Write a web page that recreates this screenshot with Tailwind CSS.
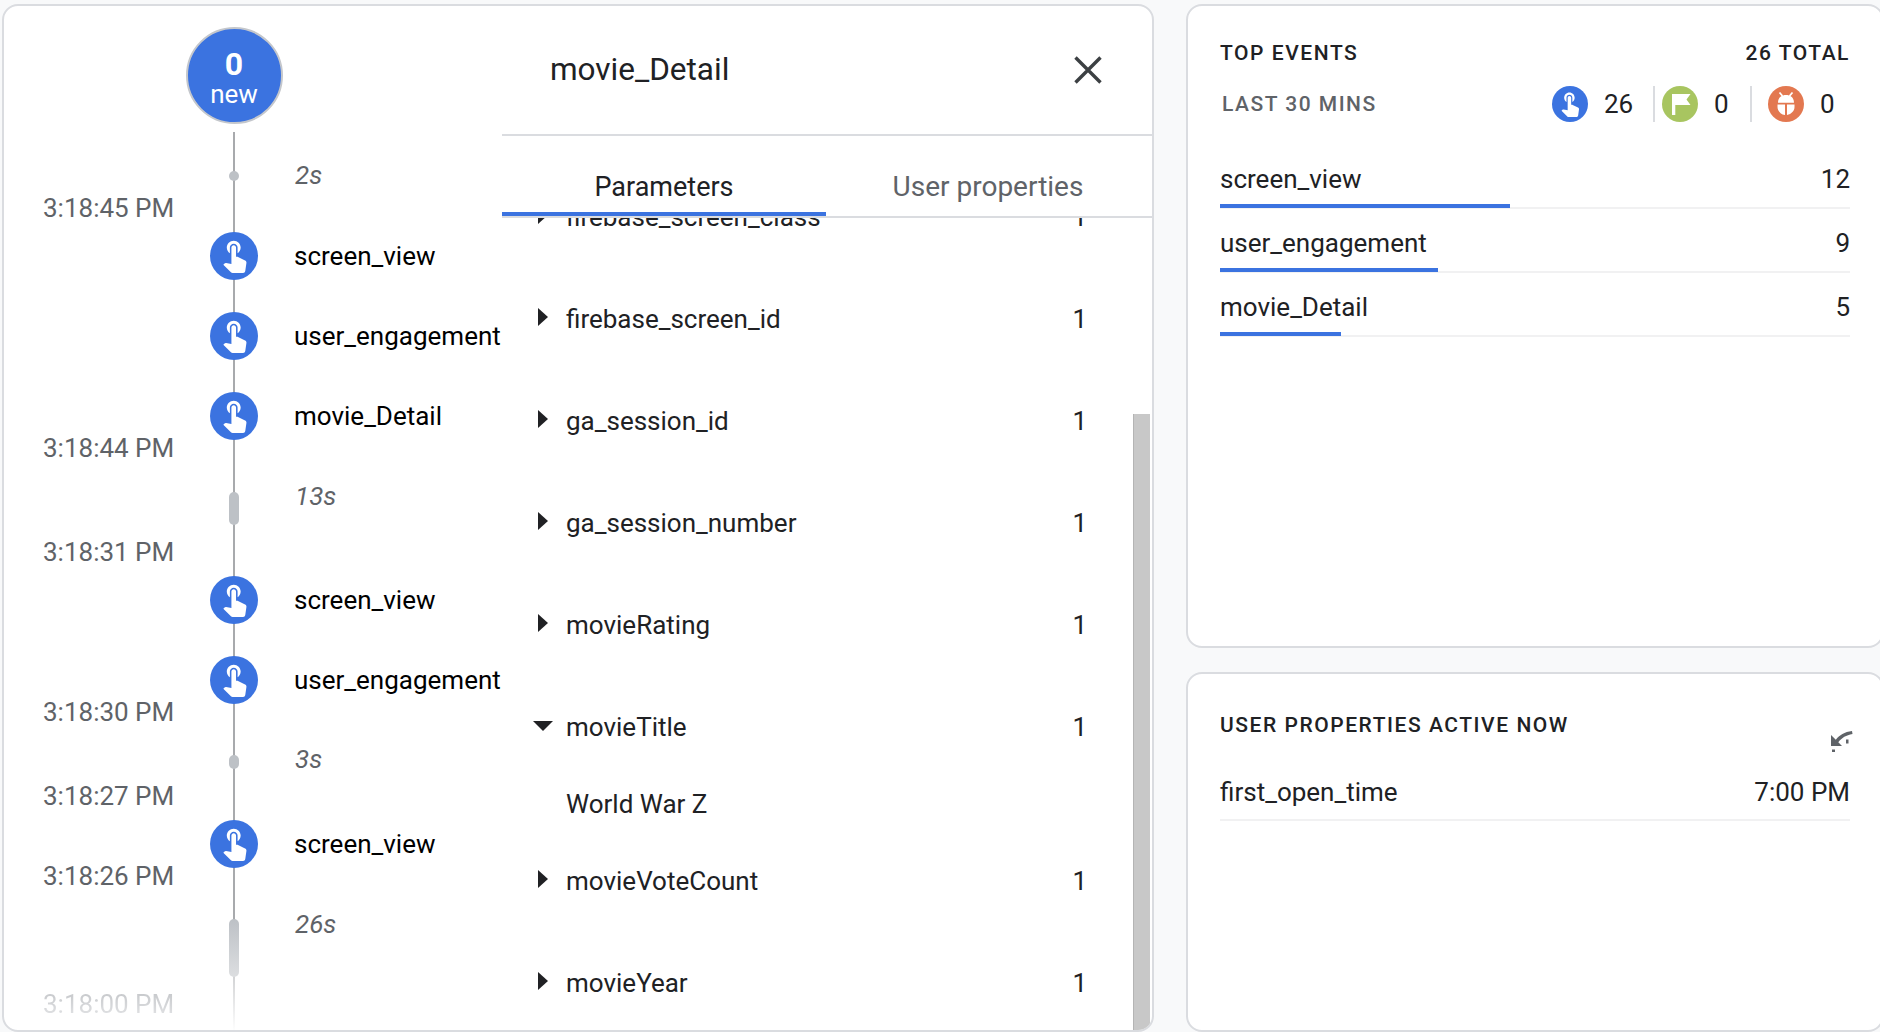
<!DOCTYPE html>
<html lang="en">
  <head>
    <meta charset="UTF-8" />
    <title>DebugView</title>
    <script src="https://cdn.jsdelivr.net/npm/@tailwindcss/browser@4"></script>
  </head>
  <body class="h-[1032px] w-[1880px] overflow-hidden bg-[#f8f9fa] font-['Roboto',sans-serif] text-[#202124]">
    <div class="flex h-full pt-1 pl-0.5">
      <!-- Timeline + event detail card -->
      <div class="flex h-[1028px] w-[1152px] shrink-0 overflow-hidden rounded-2xl border-2 border-[#dadce0] bg-white">
        <!-- Timestamps -->
        <div class="flex w-[206px] shrink-0 flex-col pl-[39px] text-[26px] leading-7 whitespace-nowrap text-[#5f6368]">
          <span class="mt-[188px]">3:18:45 PM</span>
          <span class="mt-[212px]">3:18:44 PM</span>
          <span class="mt-[76px]">3:18:31 PM</span>
          <span class="mt-[132px]">3:18:30 PM</span>
          <span class="mt-[56px]">3:18:27 PM</span>
          <span class="mt-[52px]">3:18:26 PM</span>
          <span class="mt-[100px] bg-gradient-to-b from-[#c4c6c9] to-[#e3e4e6] bg-clip-text text-transparent">3:18:00 PM</span>
        </div>
        <!-- Rail -->
        <div class="relative flex w-12 shrink-0 flex-col items-center">
          <div class="absolute top-[126px] left-[23px] h-[900px] w-0.5 bg-[linear-gradient(to_bottom,#a8aaad_0%,#a8aaad_88%,#ffffff_100%)]"></div>
          <div class="relative mt-[21px] flex h-[97px] w-[97px] shrink-0 flex-col items-center justify-center rounded-full border-2 border-[#c4c7cc] bg-[#3b73e0] pt-[3px] text-white">
            <span class="text-[32px] leading-[34px] font-bold">0</span>
            <span class="text-[26px] leading-[26px]">new</span>
          </div>
          <div class="relative mt-[47px] h-2.5 w-2.5 shrink-0 rounded-full bg-[#bdc1c6]"></div>
          <div class="relative mt-[51px] flex h-12 w-12 shrink-0 items-center justify-center rounded-full bg-[#3b73e0]"><svg class="h-[37px] w-[37px] shrink-0 -translate-y-0.5 fill-white" viewBox="0 0 24 24"><path d="M9 11.24V7.5C9 6.12 10.12 5 11.5 5S14 6.12 14 7.5v3.74c1.21-.81 2-2.18 2-3.74C16 5.01 13.99 3 11.5 3S7 5.01 7 7.5c0 1.56.79 2.93 2 3.74zm9.84 4.63l-4.54-2.26c-.17-.07-.35-.11-.54-.11H13v-6c0-.83-.67-1.5-1.5-1.5S10 6.67 10 7.5v10.74l-3.43-.72c-.08-.01-.15-.03-.24-.03-.31 0-.59.13-.79.33l-.79.8 4.94 4.94c.27.27.65.44 1.06.44h6.79c.75 0 1.33-.55 1.44-1.28l.75-5.27c.01-.07.02-.14.02-.2 0-.62-.38-1.16-.91-1.38z"/></svg></div>
          <div class="relative mt-8 flex h-12 w-12 shrink-0 items-center justify-center rounded-full bg-[#3b73e0]"><svg class="h-[37px] w-[37px] shrink-0 -translate-y-0.5 fill-white" viewBox="0 0 24 24"><path d="M9 11.24V7.5C9 6.12 10.12 5 11.5 5S14 6.12 14 7.5v3.74c1.21-.81 2-2.18 2-3.74C16 5.01 13.99 3 11.5 3S7 5.01 7 7.5c0 1.56.79 2.93 2 3.74zm9.84 4.63l-4.54-2.26c-.17-.07-.35-.11-.54-.11H13v-6c0-.83-.67-1.5-1.5-1.5S10 6.67 10 7.5v10.74l-3.43-.72c-.08-.01-.15-.03-.24-.03-.31 0-.59.13-.79.33l-.79.8 4.94 4.94c.27.27.65.44 1.06.44h6.79c.75 0 1.33-.55 1.44-1.28l.75-5.27c.01-.07.02-.14.02-.2 0-.62-.38-1.16-.91-1.38z"/></svg></div>
          <div class="relative mt-8 flex h-12 w-12 shrink-0 items-center justify-center rounded-full bg-[#3b73e0]"><svg class="h-[37px] w-[37px] shrink-0 -translate-y-0.5 fill-white" viewBox="0 0 24 24"><path d="M9 11.24V7.5C9 6.12 10.12 5 11.5 5S14 6.12 14 7.5v3.74c1.21-.81 2-2.18 2-3.74C16 5.01 13.99 3 11.5 3S7 5.01 7 7.5c0 1.56.79 2.93 2 3.74zm9.84 4.63l-4.54-2.26c-.17-.07-.35-.11-.54-.11H13v-6c0-.83-.67-1.5-1.5-1.5S10 6.67 10 7.5v10.74l-3.43-.72c-.08-.01-.15-.03-.24-.03-.31 0-.59.13-.79.33l-.79.8 4.94 4.94c.27.27.65.44 1.06.44h6.79c.75 0 1.33-.55 1.44-1.28l.75-5.27c.01-.07.02-.14.02-.2 0-.62-.38-1.16-.91-1.38z"/></svg></div>
          <div class="relative mt-[52px] h-[33px] w-2.5 shrink-0 rounded-full bg-[#bdc1c6]"></div>
          <div class="relative mt-[51px] flex h-12 w-12 shrink-0 items-center justify-center rounded-full bg-[#3b73e0]"><svg class="h-[37px] w-[37px] shrink-0 -translate-y-0.5 fill-white" viewBox="0 0 24 24"><path d="M9 11.24V7.5C9 6.12 10.12 5 11.5 5S14 6.12 14 7.5v3.74c1.21-.81 2-2.18 2-3.74C16 5.01 13.99 3 11.5 3S7 5.01 7 7.5c0 1.56.79 2.93 2 3.74zm9.84 4.63l-4.54-2.26c-.17-.07-.35-.11-.54-.11H13v-6c0-.83-.67-1.5-1.5-1.5S10 6.67 10 7.5v10.74l-3.43-.72c-.08-.01-.15-.03-.24-.03-.31 0-.59.13-.79.33l-.79.8 4.94 4.94c.27.27.65.44 1.06.44h6.79c.75 0 1.33-.55 1.44-1.28l.75-5.27c.01-.07.02-.14.02-.2 0-.62-.38-1.16-.91-1.38z"/></svg></div>
          <div class="relative mt-8 flex h-12 w-12 shrink-0 items-center justify-center rounded-full bg-[#3b73e0]"><svg class="h-[37px] w-[37px] shrink-0 -translate-y-0.5 fill-white" viewBox="0 0 24 24"><path d="M9 11.24V7.5C9 6.12 10.12 5 11.5 5S14 6.12 14 7.5v3.74c1.21-.81 2-2.18 2-3.74C16 5.01 13.99 3 11.5 3S7 5.01 7 7.5c0 1.56.79 2.93 2 3.74zm9.84 4.63l-4.54-2.26c-.17-.07-.35-.11-.54-.11H13v-6c0-.83-.67-1.5-1.5-1.5S10 6.67 10 7.5v10.74l-3.43-.72c-.08-.01-.15-.03-.24-.03-.31 0-.59.13-.79.33l-.79.8 4.94 4.94c.27.27.65.44 1.06.44h6.79c.75 0 1.33-.55 1.44-1.28l.75-5.27c.01-.07.02-.14.02-.2 0-.62-.38-1.16-.91-1.38z"/></svg></div>
          <div class="relative mt-[51px] h-3.5 w-2.5 shrink-0 rounded-full bg-[#bdc1c6]"></div>
          <div class="relative mt-[51px] flex h-12 w-12 shrink-0 items-center justify-center rounded-full bg-[#3b73e0]"><svg class="h-[37px] w-[37px] shrink-0 -translate-y-0.5 fill-white" viewBox="0 0 24 24"><path d="M9 11.24V7.5C9 6.12 10.12 5 11.5 5S14 6.12 14 7.5v3.74c1.21-.81 2-2.18 2-3.74C16 5.01 13.99 3 11.5 3S7 5.01 7 7.5c0 1.56.79 2.93 2 3.74zm9.84 4.63l-4.54-2.26c-.17-.07-.35-.11-.54-.11H13v-6c0-.83-.67-1.5-1.5-1.5S10 6.67 10 7.5v10.74l-3.43-.72c-.08-.01-.15-.03-.24-.03-.31 0-.59.13-.79.33l-.79.8 4.94 4.94c.27.27.65.44 1.06.44h6.79c.75 0 1.33-.55 1.44-1.28l.75-5.27c.01-.07.02-.14.02-.2 0-.62-.38-1.16-.91-1.38z"/></svg></div>
          <div class="relative mt-[51px] h-[58px] w-2.5 shrink-0 rounded-full bg-gradient-to-b from-[#bdc1c6] to-[#dcdee0]"></div>
        </div>
        <!-- Event labels -->
        <div class="flex w-[244px] shrink-0 flex-col pl-9 text-[26px] leading-7 whitespace-nowrap text-black">
          <span class="mt-[155px] ml-px text-[#5f6368] italic">2s</span>
          <span class="mt-[53px]">screen_view</span>
          <span class="mt-[52px]">user_engagement</span>
          <span class="mt-[52px]">movie_Detail</span>
          <span class="mt-[52px] ml-px text-[#5f6368] italic">13s</span>
          <span class="mt-[76px]">screen_view</span>
          <span class="mt-[52px]">user_engagement</span>
          <span class="mt-[51px] ml-px text-[#5f6368] italic">3s</span>
          <span class="mt-[57px]">screen_view</span>
          <span class="mt-[52px] ml-px text-[#5f6368] italic">26s</span>
        </div>
        <!-- Event detail -->
        <div class="flex min-w-0 flex-1 flex-col">
          <div class="flex h-[130px] shrink-0 items-center justify-between border-b-2 border-[#dadce0] pr-[50px] pl-12">
            <span class="text-[31.5px] leading-9">movie_Detail</span>
            <svg class="h-[28px] w-[28px] stroke-[#3c4043]" viewBox="0 0 28 28" fill="none" stroke-width="3.4"><path d="M1.5 1.5l25 25M26.5 1.5l-25 25"/></svg>
          </div>
          <div class="relative z-10 flex h-[82px] shrink-0 border-b-2 border-[#dadce0] bg-white leading-8">
            <div class="relative flex flex-1 justify-center pt-[35px] text-[27px] text-[#202124]">
              Parameters
              <div class="absolute right-0 bottom-0 left-0 h-1 bg-[#3b73e0]"></div>
            </div>
            <div class="flex flex-1 justify-center pt-[35px] pr-0.5 text-[28px] text-[#5f6368]">User properties</div>
          </div>
          <div class="flex min-h-0 flex-1 overflow-hidden">
            <div class="-mt-[52px] min-w-0 flex-1 text-[26px] leading-8">
              <div class="flex h-[102px] items-center justify-between pr-[46px] pl-[36px]">
                <div class="flex items-center gap-[18px]"><span class="h-0 w-0 -translate-y-[2px] border-y-[9px] border-l-[10px] border-y-transparent border-l-[#202124]"></span>firebase_screen_class</div><span>1</span>
              </div>
              <div class="flex h-[102px] items-center justify-between pr-[46px] pl-[36px]">
                <div class="flex items-center gap-[18px]"><span class="h-0 w-0 -translate-y-[2px] border-y-[9px] border-l-[10px] border-y-transparent border-l-[#202124]"></span>firebase_screen_id</div><span>1</span>
              </div>
              <div class="flex h-[102px] items-center justify-between pr-[46px] pl-[36px]">
                <div class="flex items-center gap-[18px]"><span class="h-0 w-0 -translate-y-[2px] border-y-[9px] border-l-[10px] border-y-transparent border-l-[#202124]"></span>ga_session_id</div><span>1</span>
              </div>
              <div class="flex h-[102px] items-center justify-between pr-[46px] pl-[36px]">
                <div class="flex items-center gap-[18px]"><span class="h-0 w-0 -translate-y-[2px] border-y-[9px] border-l-[10px] border-y-transparent border-l-[#202124]"></span>ga_session_number</div><span>1</span>
              </div>
              <div class="flex h-[102px] items-center justify-between pr-[46px] pl-[36px]">
                <div class="flex items-center gap-[18px]"><span class="h-0 w-0 -translate-y-[2px] border-y-[9px] border-l-[10px] border-y-transparent border-l-[#202124]"></span>movieRating</div><span>1</span>
              </div>
              <div class="flex h-[102px] items-center justify-between pr-[46px] pl-[31px]">
                <div class="flex items-center gap-[13px]"><span class="h-0 w-0 -translate-y-[1px] border-x-[10px] border-t-[10px] border-x-transparent border-t-[#202124]"></span>movieTitle</div><span>1</span>
              </div>
              <div class="flex h-[52px] items-center pl-[64px]">World War Z</div>
              <div class="flex h-[102px] items-center justify-between pr-[46px] pl-[36px]">
                <div class="flex items-center gap-[18px]"><span class="h-0 w-0 -translate-y-[2px] border-y-[9px] border-l-[10px] border-y-transparent border-l-[#202124]"></span>movieVoteCount</div><span>1</span>
              </div>
              <div class="flex h-[102px] items-center justify-between pr-[46px] pl-[36px]">
                <div class="flex items-center gap-[18px]"><span class="h-0 w-0 -translate-y-[2px] border-y-[9px] border-l-[10px] border-y-transparent border-l-[#202124]"></span>movieYear</div><span>1</span>
              </div>
            </div>
            <!-- Scrollbar -->
            <div class="mr-0.5 w-[17px] shrink-0 pt-[196px]">
              <div class="h-full border-l border-[#b4b4b4] bg-[#c8c8c8]"></div>
            </div>
          </div>
        </div>
      </div>
      <!-- Right column -->
      <div class="ml-8 flex w-[698px] shrink-0 flex-col gap-6">
        <!-- Top events -->
        <div class="h-[644px] shrink-0 rounded-2xl border-2 border-[#dadce0] bg-white pt-[33px] pr-8 pl-8">
          <div class="flex justify-between text-[21px] leading-7 font-medium tracking-[1.55px] text-[#202124]">
            <span>TOP EVENTS</span><span>26 TOTAL</span>
          </div>
          <div class="mt-[19px] flex h-9 items-center">
            <span class="ml-0.5 text-[21px] leading-7 font-medium tracking-[1.5px] text-[#5f6368]">LAST 30 MINS</span>
            <div class="ml-auto flex items-center">
              <span class="flex h-9 w-9 items-center justify-center rounded-full bg-[#3b73e0]"><svg class="h-7 w-7 -translate-y-px fill-white" viewBox="0 0 24 24"><path d="M9 11.24V7.5C9 6.12 10.12 5 11.5 5S14 6.12 14 7.5v3.74c1.21-.81 2-2.18 2-3.74C16 5.01 13.99 3 11.5 3S7 5.01 7 7.5c0 1.56.79 2.93 2 3.74zm9.84 4.63l-4.54-2.26c-.17-.07-.35-.11-.54-.11H13v-6c0-.83-.67-1.5-1.5-1.5S10 6.67 10 7.5v10.74l-3.43-.72c-.08-.01-.15-.03-.24-.03-.31 0-.59.13-.79.33l-.79.8 4.94 4.94c.27.27.65.44 1.06.44h6.79c.75 0 1.33-.55 1.44-1.28l.75-5.27c.01-.07.02-.14.02-.2 0-.62-.38-1.16-.91-1.38z"/></svg></span>
              <span class="ml-4 w-[49px] text-[26px] leading-7">26</span>
              <span class="h-9 w-0.5 bg-[#dadce0]"></span>
              <span class="ml-[7px] flex h-9 w-9 items-center justify-center rounded-full bg-[#a8c560]"><svg class="h-9 w-9 fill-white" viewBox="0 0 36 36"><path d="M10 8h18.500l-4 5.500 4 5.500H13.300v10H10z"/></svg></span>
              <span class="ml-4 w-9 text-[26px] leading-7">0</span>
              <span class="h-9 w-0.5 bg-[#dadce0]"></span>
              <span class="ml-4 flex h-9 w-9 items-center justify-center rounded-full bg-[#e37850]"><svg class="h-9 w-9" viewBox="0 0 36 36"><path class="stroke-white" fill="none" stroke-width="1.8" d="M11.500 6.500l3 3.500M24.500 6.500l-3 3.500"/><path class="fill-white" d="M10 16.800C10 11 14 9 18 9s8 2 8 7.800zM9.500 18.500h7.500v10.500c-4.500-.8-7.500-4.200-7.500-8zM19 18.500h7.500v2.500c0 3.800-3 7.200-7.500 8z"/></svg></span>
              <span class="ml-4 w-[30px] text-[26px] leading-7">0</span>
            </div>
          </div>
          <div class="mt-[23px] flex flex-col text-[26px] leading-7">
            <div class="relative flex h-16 items-end justify-between border-b-2 border-[#f1f1f2] pb-3.5">
              <span>screen_view</span><span>12</span>
              <div class="absolute -bottom-px left-0 h-1 w-[290px] bg-[#3b73e0]"></div>
            </div>
            <div class="relative flex h-16 items-end justify-between border-b-2 border-[#f1f1f2] pb-3.5">
              <span>user_engagement</span><span>9</span>
              <div class="absolute -bottom-px left-0 h-1 w-[218px] bg-[#3b73e0]"></div>
            </div>
            <div class="relative flex h-16 items-end justify-between border-b-2 border-[#f1f1f2] pb-3.5">
              <span>movie_Detail</span><span>5</span>
              <div class="absolute -bottom-px left-0 h-1 w-[121px] bg-[#3b73e0]"></div>
            </div>
          </div>
        </div>
        <!-- User properties -->
        <div class="relative min-h-0 flex-1 rounded-2xl border-2 border-[#dadce0] bg-white pt-[37px] pr-8 pl-8">
          <div class="text-[21px] leading-7 font-medium tracking-[1.55px] text-[#202124]">USER PROPERTIES ACTIVE NOW</div>
          <svg class="absolute top-[53px] right-[28px] h-7 w-7 fill-[#5f6368]" viewBox="0 0 28 28"><path d="M5 8v11h11l-3.700-3.700C16 10.500 20 8.300 26.500 7l-.5-3C18.500 5 13.500 8 9.800 12.800z"/><path d="M6 22.500h3V25H6zM20 12.500h2.500v4H20z"/></svg>
          <div class="mt-[39px] flex h-[43px] items-start justify-between border-b-2 border-[#f1f1f2] text-[26px] leading-7">
            <span>first_open_time</span><span>7:00 PM</span>
          </div>
        </div>
      </div>
    </div>
  </body>
</html>
